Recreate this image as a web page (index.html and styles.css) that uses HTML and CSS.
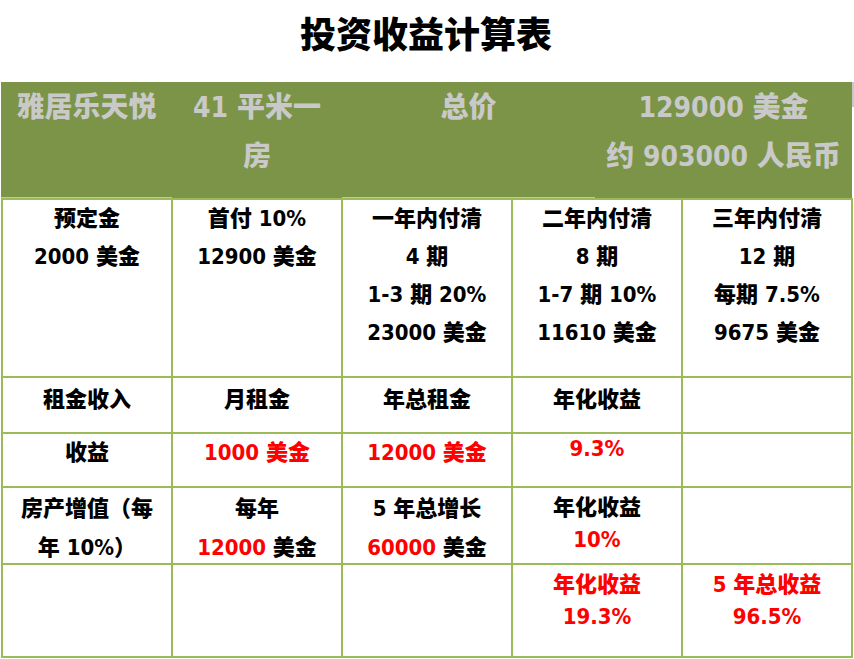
FILE: index.html
```html
<!DOCTYPE html>
<html lang="zh-CN">
<head>
<meta charset="utf-8">
<title>投资收益计算表</title>
<link rel="stylesheet" href="styles.css">
</head>
<body>
<h1 class="title">投资收益计算表</h1>
<div class="head">
  <div class="hcell hc1 line">雅居乐天悦</div>
  <div class="hcell hc2">41 平米一<br>房</div>
  <div class="hcell hc3 line">总价</div>
  <div class="hcell hc4">129000 美金<br>约 903000 人民币</div>
  <div class="edge"></div>
</div>
<div class="grid">
  <div class="cell r1">预定金<br>2000 美金</div>
  <div class="cell r1">首付 10%<br>12900 美金</div>
  <div class="cell r1">一年内付清<br>4 期<br>1-3 期 20%<br>23000 美金</div>
  <div class="cell r1">二年内付清<br>8 期<br>1-7 期 10%<br>11610 美金</div>
  <div class="cell r1">三年内付清<br>12 期<br>每期 7.5%<br>9675 美金</div>

  <div class="cell r2">租金收入</div>
  <div class="cell r2">月租金</div>
  <div class="cell r2">年总租金</div>
  <div class="cell r2">年化收益</div>
  <div class="cell r2"></div>

  <div class="cell r3">收益</div>
  <div class="cell r3 red">1000 美金</div>
  <div class="cell r3 red">12000 美金</div>
  <div class="cell r3 red tight">9.3%</div>
  <div class="cell r3"></div>

  <div class="cell r4 loose">房产增值（每<br>年 10%）</div>
  <div class="cell r4 loose">每年<br><span class="red">12000</span> 美金</div>
  <div class="cell r4 loose">5 年总增长<br><span class="red">60000</span> 美金</div>
  <div class="cell r4 compact">年化收益<br><span class="red">10%</span></div>
  <div class="cell r4"></div>

  <div class="cell r5"></div>
  <div class="cell r5"></div>
  <div class="cell r5"></div>
  <div class="cell r5 compact red">年化收益<br>19.3%</div>
  <div class="cell r5 compact red">5 年总收益<br>96.5%</div>
</div>
</body>
</html>
```
FILE: styles.css
```css
html, body {
  margin: 0;
  padding: 0;
  background: #ffffff;
}

body {
  width: 854px;
  font-family: "DejaVu Sans Condensed", "DejaVu Sans", "Noto Sans CJK SC", sans-serif;
  font-stretch: condensed;
  font-weight: 900;
  color: #000000;
}

.title {
  margin: 0 0 18px 0;
  height: 64px;
  line-height: 64px;
  font-family: "Noto Sans CJK SC", sans-serif;
  font-stretch: normal;
  font-size: 36px;
  font-weight: 900;
  text-align: center;
  padding-right: 2px;
}

.head {
  display: flex;
  margin-left: 1px;
  height: 116px;
}

.hcell {
  box-sizing: border-box;
  height: 116px;
  background: #7b9448;
  color: #c9c9c9;
  font-size: 28px;
  line-height: 49px;
  padding-top: 1px;
  text-align: center;
  border-bottom: 1px solid #7b9448;
}

.hcell.line {
  border-bottom-color: #c0c0c0;
}

.hc1 { width: 171px; }
.hc2 { width: 170px; }
.hc3 { width: 253px; }
.hc4 { width: 257px; }

.edge {
  width: 2px;
  height: 25px;
  background: #c8c8c8;
}

.grid {
  display: grid;
  grid-template-columns: repeat(5, 170px);
  grid-template-rows: 178px 56px 54px 77px 93px;
  margin-left: 1px;
  width: 852px;
  box-sizing: border-box;
  border-left: 2px solid #9bbb59;
  border-top: 2px solid #9bbb59;
}

.cell {
  box-sizing: border-box;
  border-right: 2px solid #9bbb59;
  border-bottom: 2px solid #9bbb59;
  font-size: 22px;
  line-height: 38px;
  text-align: center;
  white-space: nowrap;
}

.r1 { padding-top: 0; }
.r2 { padding-top: 3px; }
.r3 { padding-top: 0; }
.r3.tight { line-height: 30px; }
.r4 { padding-top: 1px; }
.r4.loose { line-height: 39px; }
.compact { line-height: 32px; padding-top: 4px; }

.red { color: #ff0000; }
```
